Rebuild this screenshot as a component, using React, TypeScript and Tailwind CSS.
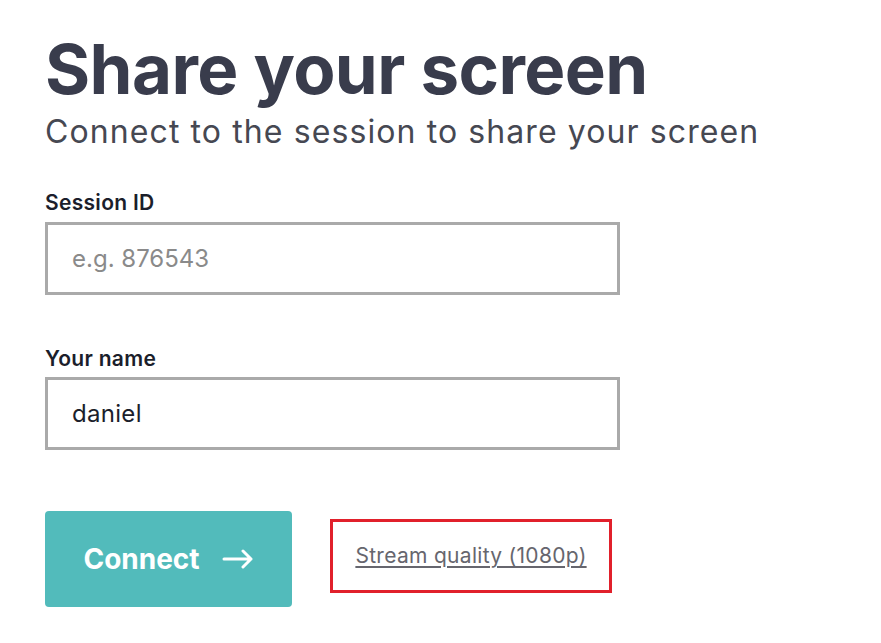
import React, { useState } from 'react';

export default function App() {
    const [sessionId, setSessionId] = useState('');
    const [name, setName] = useState('daniel');

    return (
        <div
            className="min-h-screen bg-white pl-[45px] pt-[27px]"
            style={{ fontFamily: 'Inter, "Noto Sans", sans-serif' }}
        >
            <h1 className="text-[69px] font-bold leading-[84px] tracking-[-0.6px] text-[#393c4c]">
                Share your screen
            </h1>
            <p className="mt-[1px] text-[32px] leading-[40px] tracking-[1.1px] text-[#464852]">
                Connect to the session to share your screen
            </p>

            <form className="mt-[38px] w-[575px]" onSubmit={(e) => e.preventDefault()}>
                <label className="block text-[21px] font-semibold leading-[26px] tracking-[0.3px] text-[#1b1e2b]">
                    Session ID
                </label>
                <input
                    className="mt-[6px] block h-[73px] w-full border-[3px] border-[#aaaaaa] px-[24px] text-[24px] text-[#1b1e2b] placeholder:text-[#8a8a8a] focus:outline-none"
                    placeholder="e.g. 876543"
                    value={sessionId}
                    onChange={(e) => setSessionId(e.target.value)}
                />

                <label className="mt-[51px] block text-[21px] font-semibold leading-[26px] tracking-[0.3px] text-[#1b1e2b]">
                    Your name
                </label>
                <input
                    className="mt-[5px] block h-[73px] w-full border-[3px] border-[#aaaaaa] px-[24px] text-[24px] tracking-[0.3px] text-[#1b1e2b] focus:outline-none"
                    value={name}
                    onChange={(e) => setName(e.target.value)}
                />

                <div className="mt-[61px] flex items-start gap-[38px]">
                    <button
                        type="submit"
                        className="flex h-[96px] w-[247px] items-center justify-center gap-[22px] rounded-[4px] bg-[#52bbbb] text-[28px] font-bold text-white"
                    >
                        Connect
                        <svg width="32" height="20" viewBox="0 0 32 20" fill="none" stroke="white" strokeWidth="3" strokeLinecap="round" strokeLinejoin="round">
                            <path d="M2 10h27M21 2l8 8-8 8" />
                        </svg>
                    </button>
                    <div className="mt-[8px] flex h-[74px] w-[282px] items-center justify-center border-[3px] border-[#e1202b]">
                        <a href="#" className="text-[21px] tracking-[0.3px] text-[#66666e] underline underline-offset-[3px]">
                            Stream quality (1080p)
                        </a>
                    </div>
                </div>
            </form>
        </div>
    );
}
